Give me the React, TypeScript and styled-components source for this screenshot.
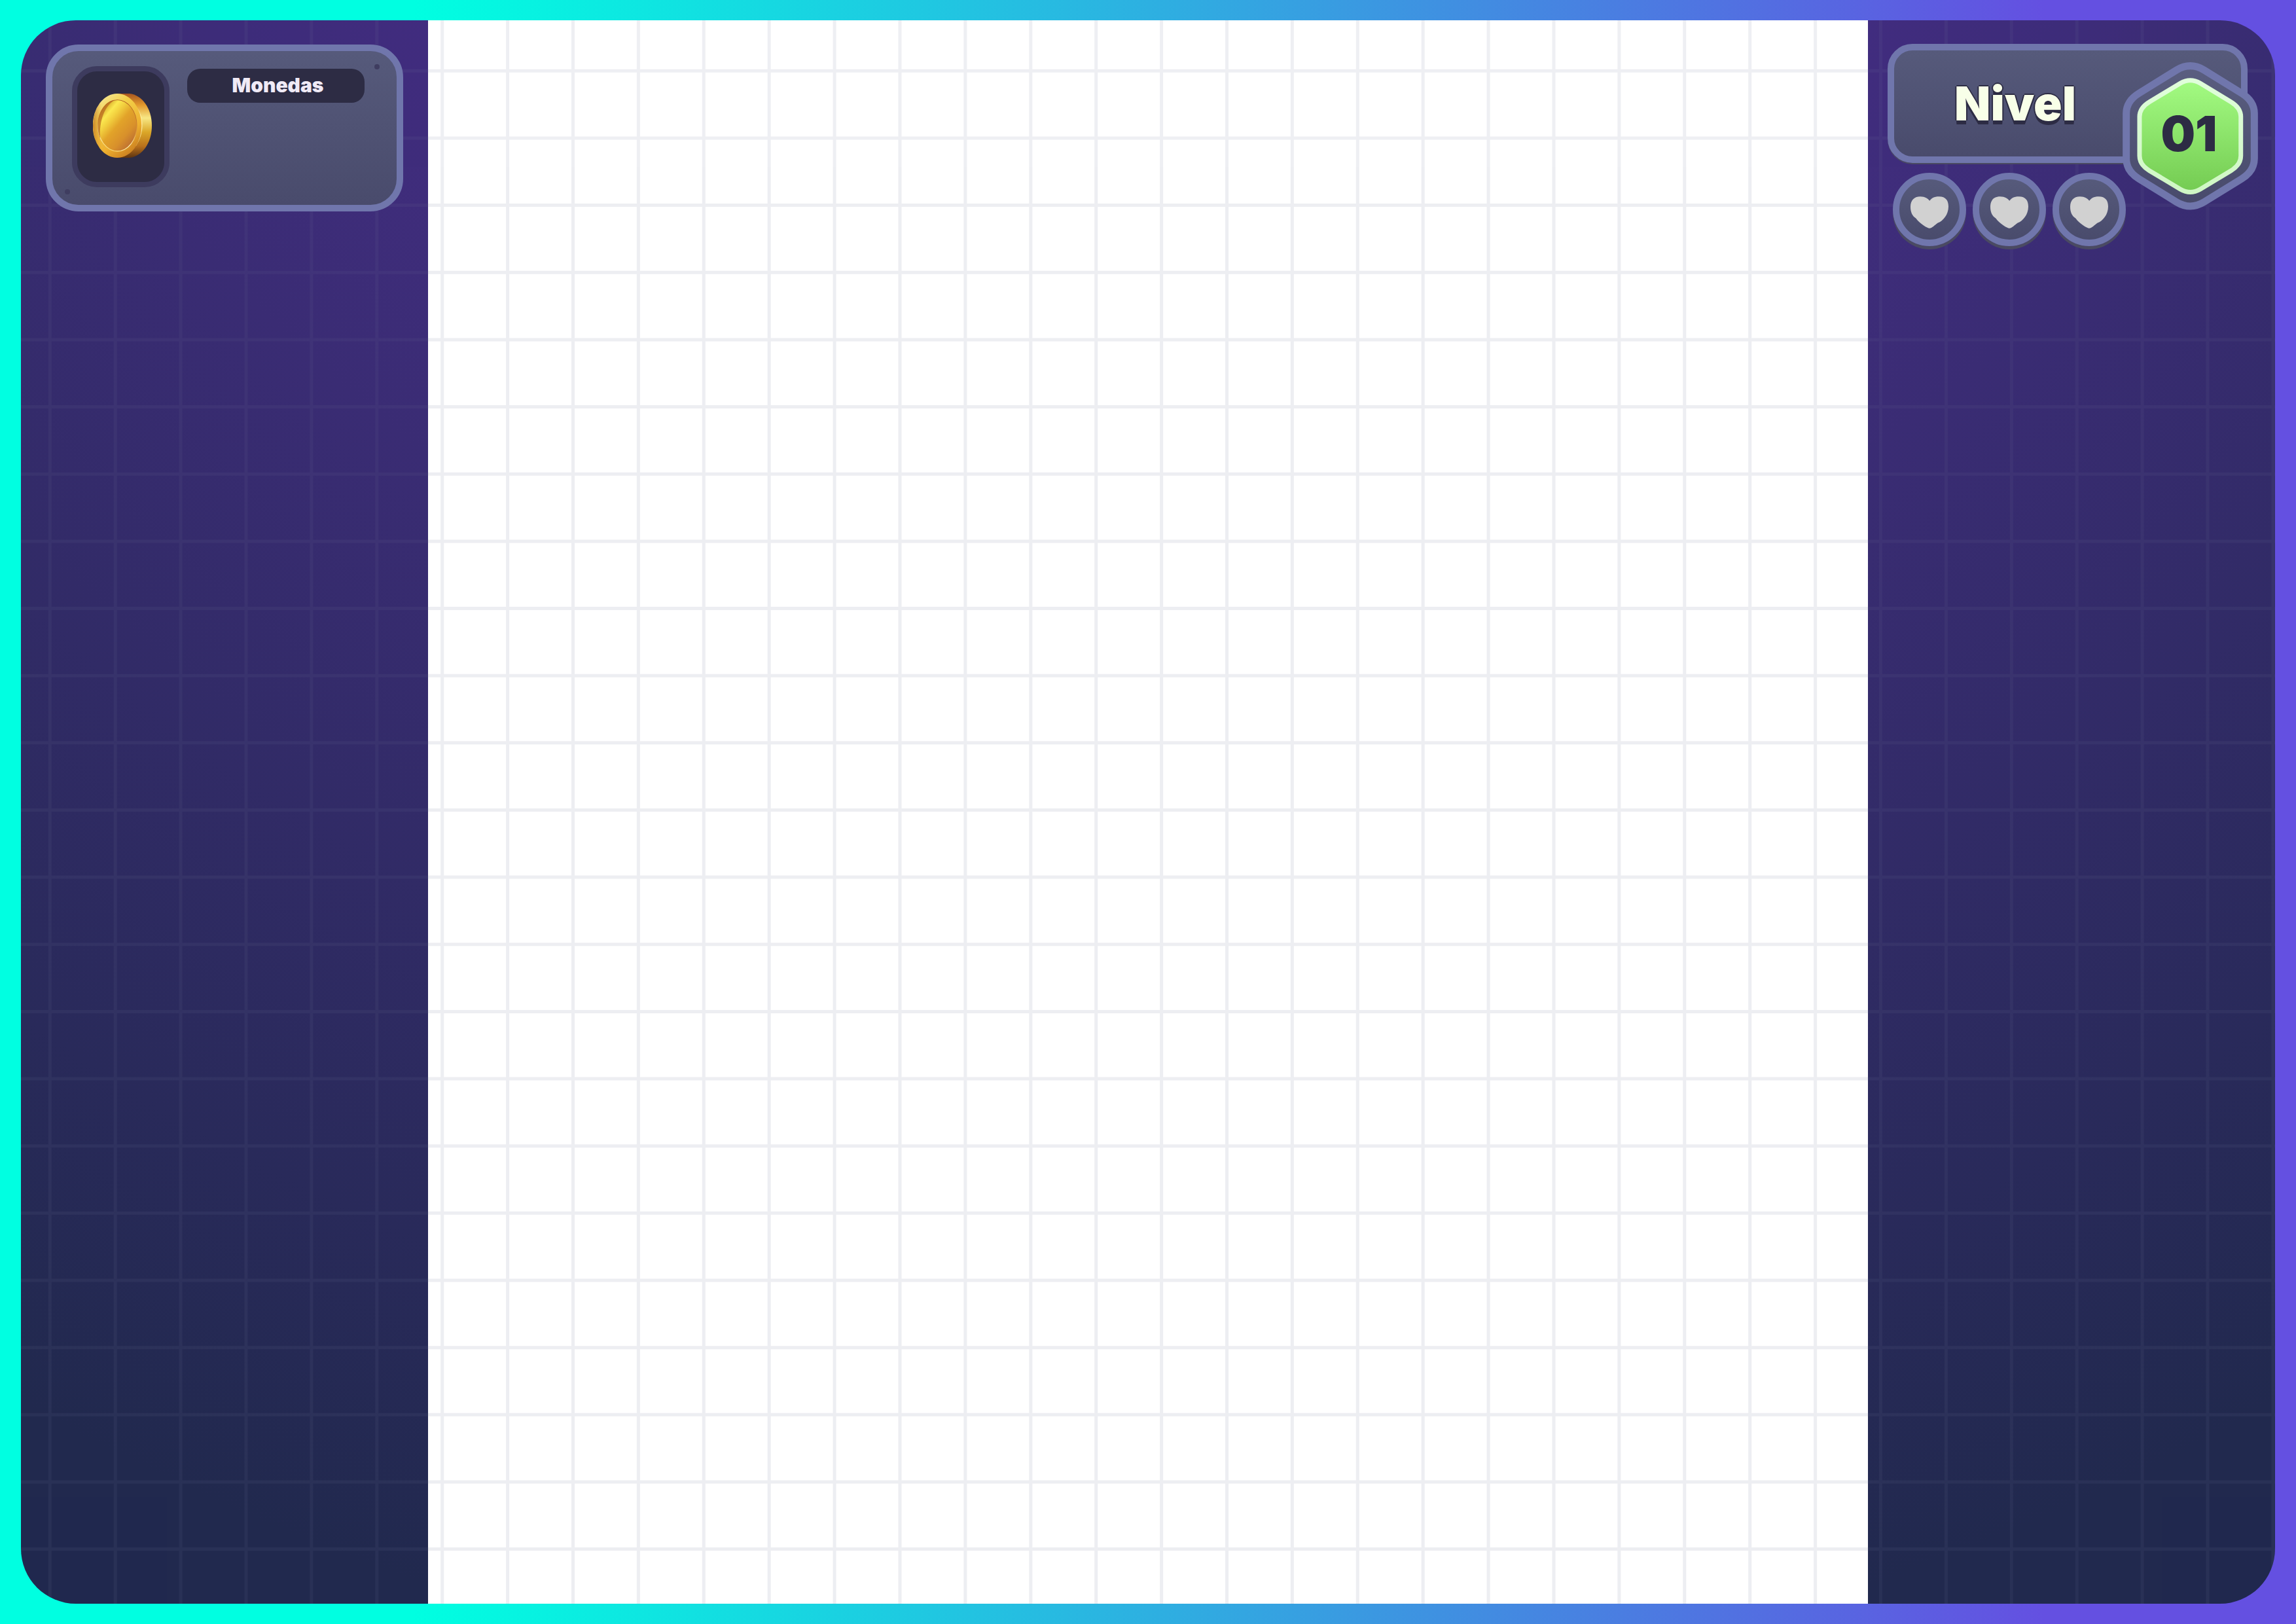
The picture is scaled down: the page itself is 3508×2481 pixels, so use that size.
import React from 'react';
import styled, { createGlobalStyle } from 'styled-components';

const GlobalStyle = createGlobalStyle`
  *, *::before, *::after { box-sizing: border-box; }
  html, body, #root { height: 100%; }
  body {
    margin: 0;
    font-family: Inter, 'Noto Sans', sans-serif;
  }
`;

const Frame = styled.div`
  min-height: 100%;
  display: flex;
  padding: 31px 32px;
  background: linear-gradient(to right, #00ffe1 18%, #6450e1 89%);
`;

const Screen = styled.main`
  position: relative;
  flex: 1;
  display: grid;
  grid-template-columns: 622px 1fr 622px;
  overflow: hidden;
  border-radius: 84px;
  background: radial-gradient(circle at 50% -880px, #422d80 1400px, #21294e 3450px);
`;

/* Squared paper laid over both the side panels and the board */
const GridOverlay = styled.svg`
  position: absolute;
  inset: 0;
  width: 100%;
  height: 100%;
  pointer-events: none;
  stroke: rgb(108, 112, 148);
  stroke-width: 5px;
  opacity: 0.115;
`;

const Side = styled.aside`
  position: relative;
  z-index: 1;
`;

const CoinSide = styled(Side)`
  padding: 37px 38px;
`;

const LevelSide = styled(Side)`
  padding: 36px 42px 36px 30px;
`;

const Board = styled.section`
  background: #fff;
`;

const Card = styled.section`
  position: relative;
  display: flex;
  border: 10px solid #7076ac;
  background: linear-gradient(#565a7b, #494b6c);
`;

const CoinCard = styled(Card)`
  gap: 27px;
  align-items: flex-start;
  min-height: 255px;
  padding: 23px 49px 23px 30px;
  border-radius: 50px;
`;

const Rivet = styled.span<{ $corner: 'top' | 'bottom' }>`
  position: absolute;
  width: 8px;
  height: 8px;
  border-radius: 50%;
  background: #3f3d60;
  ${p => (p.$corner === 'top' ? 'top: 20px; right: 26px;' : 'bottom: 16px; left: 19px;')}
`;

const CoinTile = styled.div`
  display: flex;
  justify-content: center;
  width: 149px;
  height: 185px;
  padding: 34px 0 0 5px;
  border: 8px solid #3d3b5e;
  border-radius: 38px;
  background: #2d2c44;
`;

const CoinLabel = styled.h2`
  flex: 1;
  margin: 4px 0 0;
  padding: 0 0 2px 6px;
  border-radius: 20px;
  background: #2d2c44;
  color: #f0eaf6;
  font-size: 30px;
  font-weight: 900;
  line-height: 50px;
  text-align: center;
`;

const LevelCard = styled(Card)`
  align-items: center;
  height: 182px;
  padding: 0 170px 0 10px;
  border-radius: 38px;
  box-shadow: 0 2px 0 #4a4a62;
`;

const LevelTitle = styled.h1`
  flex: 1;
  margin: 0;
  color: #f8ffe8;
  font-size: 72px;
  font-weight: 900;
  line-height: 80px;
  text-align: center;
  text-shadow: 0 -2px 0 #2d2c44, 2px 0 0 #2d2c44, -2px 0 0 #2d2c44,
    0 2px 0 #2d2c44, 0 4px 0 #2d2c44, 0 6px 0 #2d2c44;
`;

const LevelBadge = styled.div`
  position: absolute;
  top: 18px;
  right: -26px;
  display: grid;
  place-items: center;
  width: 207px;
  height: 226px;
`;

const BadgeShape = styled.svg`
  grid-area: 1 / 1;
  width: 100%;
  height: 100%;
`;

const LevelNumber = styled.strong`
  grid-area: 1 / 1;
  z-index: 1;
  padding: 0 4px 8px 0;
  color: #2d2c44;
  font-size: 74px;
  font-weight: 900;
  line-height: 80px;
`;

const Lives = styled.ul`
  display: flex;
  gap: 10px;
  margin: 15px 0 0;
  padding: 0 8px;
  list-style: none;
`;

const Life = styled.li`
  display: grid;
  place-items: center;
  width: 112px;
  height: 112px;
  padding-top: 8px;
  border: 10px solid #7076ac;
  border-radius: 50%;
  background: linear-gradient(#565a7b, #494b6c);
  box-shadow: 0 5px 0 #4a4a62;
`;

const columns = Array.from({ length: 35 }, (_, i) => `${(1.286 + 2.9007 * i).toFixed(3)}%`);
const rows = Array.from({ length: 23 }, (_, i) => `${(3.196 + 4.2435 * i).toFixed(3)}%`);

const SquaredPaper = () => (
  <GridOverlay aria-hidden="true">
    {columns.map(x => (
      <line key={x} x1={x} x2={x} y1="0" y2="100%" />
    ))}
    {rows.map(y => (
      <line key={y} x1="0" x2="100%" y1={y} y2={y} />
    ))}
  </GridOverlay>
);

const Coin = () => (
  <svg width="90" height="98" viewBox="0 0 270 294" aria-hidden="true">
    <defs>
      <linearGradient id="coinEdge" x1="0" y1="0" x2="0" y2="1">
        <stop offset="0" stopColor="#a8561f" />
        <stop offset="0.18" stopColor="#e39a2d" />
        <stop offset="0.38" stopColor="#f7e784" />
        <stop offset="0.6" stopColor="#dba728" />
        <stop offset="0.82" stopColor="#b9711c" />
        <stop offset="1" stopColor="#5e3410" />
      </linearGradient>
      <linearGradient id="coinRim" x1="0.15" y1="0" x2="0.75" y2="1">
        <stop offset="0" stopColor="#f6eaa0" />
        <stop offset="0.3" stopColor="#f2d048" />
        <stop offset="0.7" stopColor="#eeb030" />
        <stop offset="1" stopColor="#c67a1e" />
      </linearGradient>
      <linearGradient id="coinShade" x1="0" y1="0" x2="1" y2="0">
        <stop offset="0" stopColor="#bd6f22" stopOpacity="0.75" />
        <stop offset="0.18" stopColor="#d98b28" stopOpacity="0" />
      </linearGradient>
      <linearGradient id="coinFace" x1="0.1" y1="0.1" x2="0.85" y2="0.95">
        <stop offset="0" stopColor="#c98f1c" />
        <stop offset="0.2" stopColor="#fbe850" />
        <stop offset="0.32" stopColor="#f2d03f" />
        <stop offset="0.5" stopColor="#e2a329" />
        <stop offset="0.75" stopColor="#d8902b" />
        <stop offset="1" stopColor="#b96a33" />
      </linearGradient>
      <linearGradient id="coinLip" x1="0.6" y1="0" x2="0.3" y2="1">
        <stop offset="0" stopColor="#a8501a" />
        <stop offset="0.5" stopColor="#e0a040" />
        <stop offset="0.75" stopColor="#fff2bc" />
        <stop offset="1" stopColor="#f5d060" />
      </linearGradient>
    </defs>
    <path d="M112 0H168C224 6 270 66 270 147S224 288 168 294H112Z" fill="url(#coinEdge)" />
    <path d="M190 50C236 100 236 180 196 240C214 190 218 100 190 50Z" fill="#fff0a8" stroke="#fff0a8" strokeWidth="2" />
    <ellipse cx="111" cy="147" rx="112" ry="147" fill="url(#coinRim)" />
    <ellipse cx="111" cy="147" rx="111" ry="147" fill="url(#coinShade)" />
    <ellipse cx="112" cy="147" rx="91" ry="119" fill="url(#coinLip)" />
    <ellipse cx="112" cy="146" rx="88" ry="116" fill="url(#coinFace)" />
    <path d="M100 29C60 32 22 80 22 146C22 170 27 195 34 205C27 150 44 60 100 29Z" fill="#b5641e" opacity="0.7" />
  </svg>
);

const Heart = () => (
  <svg width="58" height="49" viewBox="0 0 175 147" aria-hidden="true">
    <path
      d="M88 20C96 8 108 0 132 0C162 0 175 18 175 46C175 84 150 112 126 122C112 132 98 147 88 147C78 147 44 127 25 101C8 90 0 72 0 48C0 18 16 0 45 0C68 0 80 9 88 20Z"
      fill="#d1d1d1"
    />
  </svg>
);

const Hexagon = () => (
  <BadgeShape viewBox="67 45 622 678" preserveAspectRatio="none" aria-hidden="true">
    <defs>
      <linearGradient id="hexBack" x1="0" y1="0" x2="0" y2="1">
        <stop offset="0" stopColor="#5a5e80" />
        <stop offset="1" stopColor="#484a6b" />
      </linearGradient>
      <linearGradient id="hexFill" x1="0" y1="0" x2="0" y2="1">
        <stop offset="0" stopColor="#a3fb82" />
        <stop offset="1" stopColor="#74cb52" />
      </linearGradient>
      <linearGradient id="hexRing" x1="0" y1="0" x2="0" y2="1">
        <stop offset="0" stopColor="#e0fedb" />
        <stop offset="1" stopColor="#cff7c4" />
      </linearGradient>
    </defs>
    <path
      d="M84 280Q84 223 143 187L315 81Q378 43 441 81L613 187Q672 223 672 280V487Q672 544 613 580L441 686Q378 724 315 686L143 580Q84 544 84 487Z"
      fill="url(#hexBack)"
      stroke="#7076ac"
      strokeWidth="33"
    />
    <path
      d="M145 295Q145 254 190 227L332 142Q378 115 424 142L565 227Q610 254 610 295V474Q610 515 565 542L424 627Q378 654 332 627L190 542Q145 515 145 474Z"
      fill="url(#hexFill)"
      stroke="url(#hexRing)"
      strokeWidth="21"
    />
  </BadgeShape>
);

export default function App() {
  return (
    <>
      <GlobalStyle />
      <Frame>
        <Screen>
          <CoinSide>
            <CoinCard>
              <CoinTile>
                <Coin />
              </CoinTile>
              <CoinLabel>Monedas</CoinLabel>
              <Rivet $corner="top" />
              <Rivet $corner="bottom" />
            </CoinCard>
          </CoinSide>
          <Board />
          <LevelSide>
            <LevelCard>
              <LevelTitle>Nivel</LevelTitle>
              <LevelBadge>
                <Hexagon />
                <LevelNumber>01</LevelNumber>
              </LevelBadge>
            </LevelCard>
            <Lives>
              {[1, 2, 3].map(life => (
                <Life key={life}>
                  <Heart />
                </Life>
              ))}
            </Lives>
          </LevelSide>
          <SquaredPaper />
        </Screen>
      </Frame>
    </>
  );
}
